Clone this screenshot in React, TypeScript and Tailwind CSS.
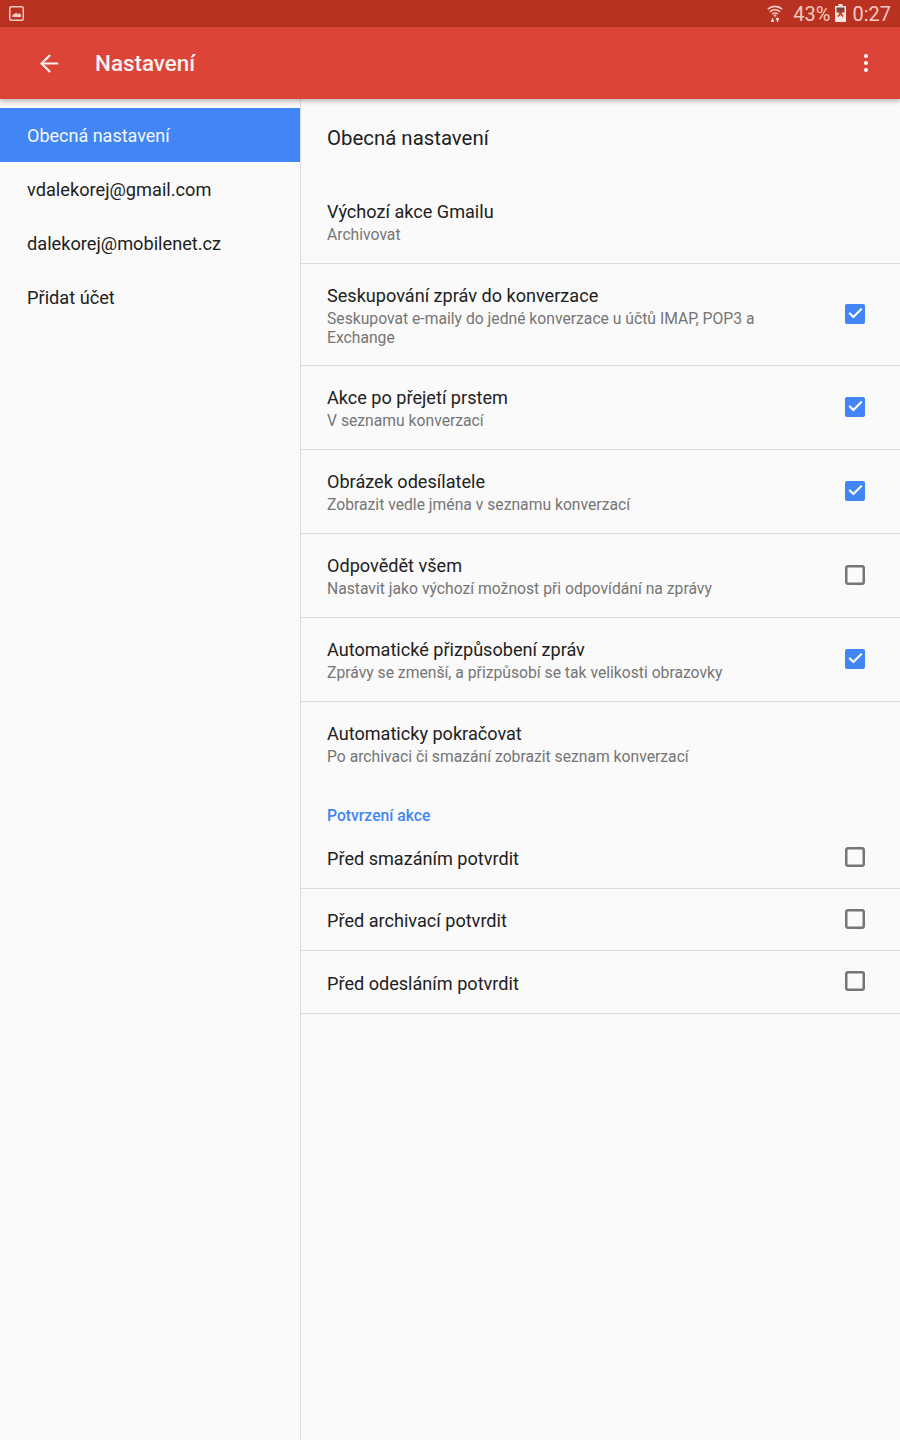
import React from "react";
import { ArrowLeft, Check } from "lucide-react";

interface SettingRow {
    title: string;
    subtitle?: string;
    checked?: boolean;
    heightClass: string;
    textClass?: string;
    divider?: boolean;
}

const accounts = ["vdalekorej@gmail.com", "dalekorej@mobilenet.cz", "Přidat účet"];

const generalRows: SettingRow[] = [
    { title: "Výchozí akce Gmailu", subtitle: "Archivovat", heightClass: "h-[101px]", textClass: "pt-[17px]", divider: true },
    {
        title: "Seskupování zpráv do konverzace",
        subtitle: "Seskupovat e-maily do jedné konverzace u účtů IMAP, POP3 a Exchange",
        checked: true,
        heightClass: "h-[102px]",
        textClass: "pt-[2px]",
        divider: true,
    },
    { title: "Akce po přejetí prstem", subtitle: "V seznamu konverzací", checked: true, heightClass: "h-[84px]", divider: true },
    { title: "Obrázek odesílatele", subtitle: "Zobrazit vedle jména v seznamu konverzací", checked: true, heightClass: "h-[84px]", divider: true },
    { title: "Odpovědět všem", subtitle: "Nastavit jako výchozí možnost při odpovídání na zprávy", checked: false, heightClass: "h-[84px]", divider: true },
    { title: "Automatické přizpůsobení zpráv", subtitle: "Zprávy se zmenší, a přizpůsobí se tak velikosti obrazovky", checked: true, heightClass: "h-[84px]", divider: true },
    { title: "Automaticky pokračovat", subtitle: "Po archivaci či smazání zobrazit seznam konverzací", heightClass: "h-[84px]" },
];

const confirmRows: SettingRow[] = [
    { title: "Před smazáním potvrdit", checked: false, heightClass: "h-[62px]", textClass: "pt-[2px]", divider: true },
    { title: "Před archivací potvrdit", checked: false, heightClass: "h-[62px]", textClass: "pt-[2px]", divider: true },
    { title: "Před odesláním potvrdit", checked: false, heightClass: "h-[63px]", textClass: "pt-[3px]", divider: true },
];

function Checkbox({ checked }: { checked: boolean }) {
    if (checked) {
        return (
            <div className="mb-[2px] flex h-5 w-5 items-center justify-center rounded-[2px] bg-[#4285f4]">
                <Check size={17} strokeWidth={3} className="text-white" />
            </div>
        );
    }
    return <div className="mb-[2px] h-5 w-5 rounded-[3px] shadow-[inset_0_0_0_2.5px_#757575]" />;
}

function Row({ row }: { row: SettingRow }) {
    return (
        <div className={`flex items-center pl-[26px] pr-[35px] ${row.heightClass} ${row.divider ? "border-b border-[#dcdcdc]" : ""}`}>
            <div className={`w-[450px] flex-1 ${row.textClass ?? ""}`}>
                <div className="text-[18.1px] leading-6 text-[#212121]">{row.title}</div>
                {row.subtitle && <div className="mt-[1px] max-w-[450px] text-[15.7px] leading-[19px] text-[#757575]">{row.subtitle}</div>}
            </div>
            {row.checked !== undefined && <Checkbox checked={row.checked} />}
        </div>
    );
}

export default function App() {
    return (
        <div className="flex h-[1440px] w-[900px] flex-col overflow-hidden bg-[#fafafa] font-['Roboto',sans-serif]">
            {/* Status bar */}
            <div className="flex h-[27px] shrink-0 items-center justify-between bg-[#b93221] pl-[9px] pr-[9px] text-[#f3c9c1]">
                <svg width="15" height="15" viewBox="0 0 15 15">
                    <rect x="0.75" y="0.75" width="13.5" height="13.5" rx="1.5" fill="none" stroke="currentColor" strokeWidth="1.5" />
                    <path d="M3 11h9V8.5L10.2 7 8.8 8.4 7.2 6.6 5 8.6 4 8z" fill="currentColor" />
                </svg>
                <div className="flex items-center pt-[2px] text-[20px] leading-[25px]">
                    <svg width="16" height="18" viewBox="0 0 16 18" className="mb-[3px] mr-[10px]">
                        <path d="M0.8 5.2a10.5 10.5 0 0 1 14.4 0M3 7.8a7.2 7.2 0 0 1 10 0M5.3 10.2a3.8 3.8 0 0 1 5.4 0" fill="none" stroke="currentColor" strokeWidth="1.6" />
                        <circle cx="8" cy="11.6" r="1.2" fill="currentColor" />
                        <path d="M5.5 14v4M4 16.5L5.5 18 7 16.5M10.5 18v-4M9 15.5L10.5 14 12 15.5" fill="none" stroke="#f7e3df" strokeWidth="1.2" />
                    </svg>
                    <span>43%</span>
                    <svg width="13" height="18" viewBox="0 0 13 18" className="mb-[3px] ml-[4px] mr-[5px]">
                        <path d="M4.5 0h4v2H12v16H1V2h3.5z" fill="#f7e3df" />
                        <path d="M2.5 3.5h8v5h-8z" fill="#6b4a44" />
                        <path d="M4 6.5l5 6M9 6.5l-5 6" stroke="#c8381f" strokeWidth="1.8" />
                    </svg>
                    <span>0:27</span>
                </div>
            </div>

            {/* App bar */}
            <div className="relative z-10 flex h-[72px] shrink-0 items-center bg-[#db4437] shadow-[0_2px_5px_rgba(0,0,0,0.3)]">
                <ArrowLeft size={27} strokeWidth={1.9} className="ml-[36px] text-[#fdeeec]" />
                <div className="ml-[32px] pt-[2px] text-[22.4px] font-medium text-[#fdf1ef]">Nastavení</div>
                <div className="ml-auto mr-[32px] flex flex-col gap-[3px]">
                    <div className="h-[4px] w-[4px] rounded-full bg-white" />
                    <div className="h-[4px] w-[4px] rounded-full bg-white" />
                    <div className="h-[4px] w-[4px] rounded-full bg-white" />
                </div>
            </div>

            <div className="flex flex-1">
                {/* Sidebar */}
                <div className="w-[301px] shrink-0 border-r border-[#dcdcdc] pt-[9px]">
                    <div className="flex h-[54px] items-center bg-[#4285f4] pl-[27px] text-[18px] text-[#f3f7fe]">Obecná nastavení</div>
                    {accounts.map((account) => (
                        <div key={account} className="flex h-[54px] items-center pl-[27px] pt-[2px] text-[18.2px] text-[#212121]">
                            {account}
                        </div>
                    ))}
                </div>

                {/* Settings */}
                <div className="flex-1">
                    <div className="flex h-[64px] items-center pl-[26px] pt-[14px] text-[20.4px] text-[#212121]">Obecná nastavení</div>
                    {generalRows.map((row) => (
                        <Row key={row.title} row={row} />
                    ))}
                    <div className="h-[41px] pl-[26px] pt-[19px] text-[15.7px] font-medium leading-[22px] text-[#4285f4]">Potvrzení akce</div>
                    {confirmRows.map((row) => (
                        <Row key={row.title} row={row} />
                    ))}
                </div>
            </div>
        </div>
    );
}
